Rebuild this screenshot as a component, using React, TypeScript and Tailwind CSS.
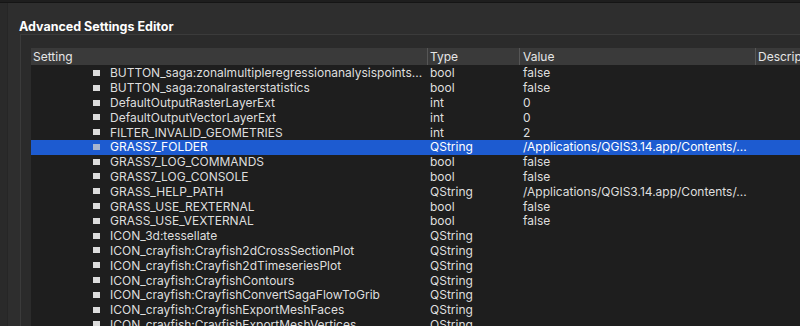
import React from 'react';

type Row = { name: string; type: string; value: string; selected?: boolean };

const rows: Row[] = [
  { name: 'BUTTON_saga:zonalmultipleregressionanalysispoints...', type: 'bool', value: 'false' },
  { name: 'BUTTON_saga:zonalrasterstatistics', type: 'bool', value: 'false' },
  { name: 'DefaultOutputRasterLayerExt', type: 'int', value: '0' },
  { name: 'DefaultOutputVectorLayerExt', type: 'int', value: '0' },
  { name: 'FILTER_INVALID_GEOMETRIES', type: 'int', value: '2' },
  { name: 'GRASS7_FOLDER', type: 'QString', value: '/Applications/QGIS3.14.app/Contents/...', selected: true },
  { name: 'GRASS7_LOG_COMMANDS', type: 'bool', value: 'false' },
  { name: 'GRASS7_LOG_CONSOLE', type: 'bool', value: 'false' },
  { name: 'GRASS_HELP_PATH', type: 'QString', value: '/Applications/QGIS3.14.app/Contents/...' },
  { name: 'GRASS_USE_REXTERNAL', type: 'bool', value: 'false' },
  { name: 'GRASS_USE_VEXTERNAL', type: 'bool', value: 'false' },
  { name: 'ICON_3d:tessellate', type: 'QString', value: '' },
  { name: 'ICON_crayfish:Crayfish2dCrossSectionPlot', type: 'QString', value: '' },
  { name: 'ICON_crayfish:Crayfish2dTimeseriesPlot', type: 'QString', value: '' },
  { name: 'ICON_crayfish:CrayfishContours', type: 'QString', value: '' },
  { name: 'ICON_crayfish:CrayfishConvertSagaFlowToGrib', type: 'QString', value: '' },
  { name: 'ICON_crayfish:CrayfishExportMeshFaces', type: 'QString', value: '' },
  { name: 'ICON_crayfish:CrayfishExportMeshVertices', type: 'QString', value: '' },
];

const SettingRow = ({ row }: { row: Row }) => (
  <div
    className={`flex h-[14.8px] items-center whitespace-nowrap ${
      row.selected ? 'bg-[#1d5bd0] text-white' : 'text-[#dedede]'
    }`}
  >
    <div className="flex w-[396px] shrink-0 items-center overflow-hidden">
      <div className="w-[62px] shrink-0" />
      <div
        className={`mb-[1px] h-[6px] w-[7px] shrink-0 ${row.selected ? 'bg-[#a9b6cf]' : 'bg-[#dcdcdc]'}`}
      />
      <span className="ml-[10px]">{row.name}</span>
    </div>
    <div className="w-[92px] shrink-0 pl-[3px]">{row.type}</div>
    <div className="w-[236px] shrink-0 pl-[4px]">{row.value}</div>
    <div className="flex-1" />
  </div>
);

export default function App() {
  return (
    <div
      className="relative h-[326px] w-[800px] overflow-hidden bg-[#2e2e2e] text-[12px]"
      style={{ fontFamily: 'Inter, "Liberation Sans", Arial, sans-serif' }}
    >
      <div className="h-[3px] border-b border-[#151515] bg-[#1e1e1e]" />
      <div className="flex h-[323px]">
        <div className="w-[8px] shrink-0 border-r border-[#262626] bg-[#2a2a2a]" />
        <div className="flex flex-1 flex-col">
          <div className="h-[31px] shrink-0 pl-[11px] pt-[16px] text-[12.5px] font-bold leading-[15px] text-white">
            Advanced Settings Editor
          </div>
          <div className="ml-[12px] flex-1 border-l border-t border-[#3b3b3b] bg-[#2b2b2b] pl-[10px] pt-[13px]">
            <div className="h-full bg-[#1e1e1e]">
              <div className="flex h-[17px] items-center bg-[#3a3a3a] text-[#e6e6e6]">
                <div className="w-[396px] shrink-0 pl-[2px]">Setting</div>
                <div className="h-full w-[92px] shrink-0 border-l border-[#565656] pl-[2px] leading-[17px]">Type</div>
                <div className="h-full w-[236px] shrink-0 border-l border-[#565656] pl-[3px] leading-[17px]">Value</div>
                <div className="h-full flex-1 overflow-hidden whitespace-nowrap border-l border-[#565656] pl-[2px] leading-[17px]">Description</div>
              </div>
              <div className="pt-[1px]">
                {rows.map((r) => (
                  <SettingRow key={r.name} row={r} />
                ))}
              </div>
            </div>
          </div>
        </div>
      </div>
    </div>
  );
}
